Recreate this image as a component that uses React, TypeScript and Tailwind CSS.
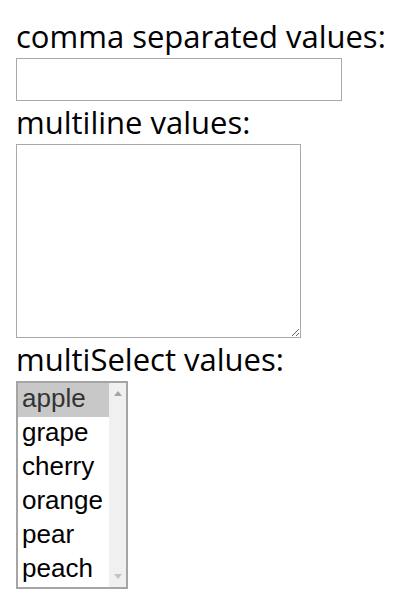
import React from "react";

const fruits = ["apple", "grape", "cherry", "orange", "pear", "peach"];

export default function App() {
  return (
    <div className="bg-white pt-[15px] pl-[16px] text-black" style={{ minHeight: 614 }}>
      <div className="font-['Open_Sans',sans-serif] text-[31px] leading-[43px] h-[43px] whitespace-nowrap">
        comma separated values:
      </div>
      <input
        type="text"
        className="block w-[326px] h-[43px] border border-[#a9a9a9] bg-white outline-none"
      />
      <div className="font-['Open_Sans',sans-serif] text-[31px] leading-[43px] h-[43px] whitespace-nowrap">
        multiline values:
      </div>
      <textarea className="block w-[285px] h-[194px] border border-[#a9a9a9] bg-white outline-none" />
      <div className="font-['Open_Sans',sans-serif] text-[31px] leading-[43px] h-[43px] whitespace-nowrap">
        multiSelect values:
      </div>
      <div className="flex w-[112px] h-[208px] border-2 border-[#a5a5a5] bg-white">
        <div className="flex-1 flex flex-col font-['Liberation_Sans',Arial,sans-serif] text-[26px]">
          {fruits.map((f, i) => (
            <div
              key={f}
              className={
                "h-[34px] leading-[30px] pl-[4px] " +
                (i === 0 ? "bg-[#c8c8c8] text-[#333]" : "text-black")
              }
            >
              {f}
            </div>
          ))}
        </div>
        <div className="w-[17px] bg-[#f0f0f0] flex flex-col justify-between items-center py-[8px]">
          <svg width="8" height="5" viewBox="0 0 8 5">
            <path d="M0 5 L4 0 L8 5 Z" fill="#a3a3a3" />
          </svg>
          <svg width="8" height="5" viewBox="0 0 8 5">
            <path d="M0 0 L8 0 L4 5 Z" fill="#c3c3c3" />
          </svg>
        </div>
      </div>
    </div>
  );
}
